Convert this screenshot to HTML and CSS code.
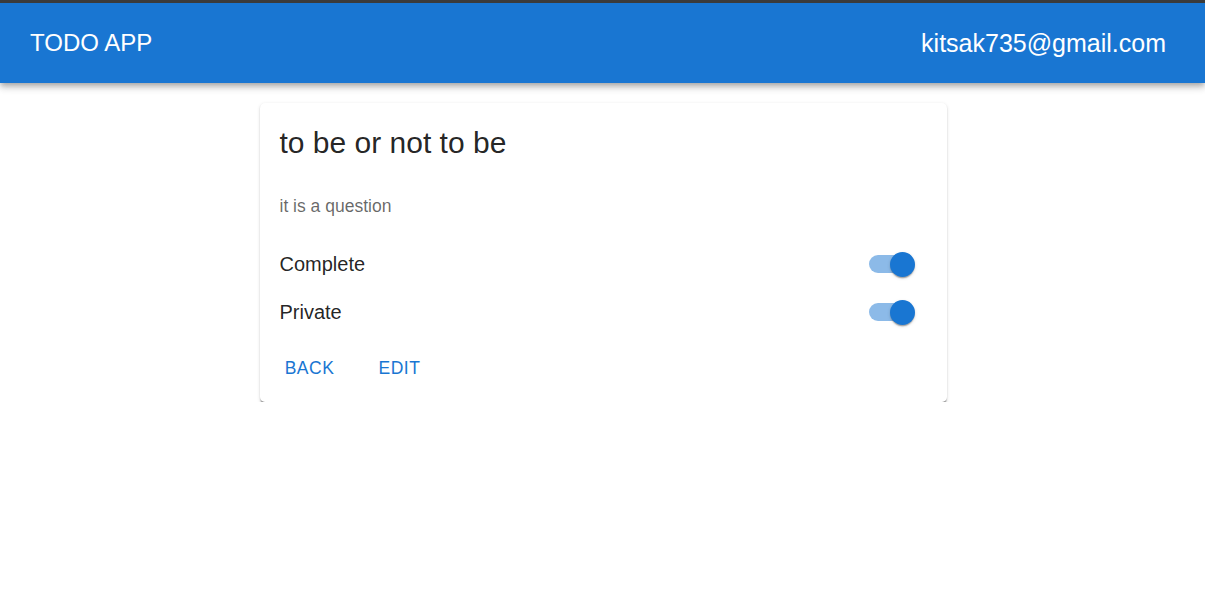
FILE: index.html
```html
<!DOCTYPE html>
<html lang="en">
<head>
<meta charset="utf-8">
<title>TODO APP</title>
<link rel="stylesheet" href="styles.css">
</head>
<body>
<header class="appbar">
  <div class="brand">TODO APP</div>
  <div class="user">kitsak735@gmail.com</div>
</header>
<main class="container">
  <section class="card">
    <div class="card-content">
      <h1 class="title">to be or not to be</h1>
      <p class="desc">it is a question</p>
      <div class="row">
        <span class="label">Complete</span>
        <span class="switch"><span class="track"></span><span class="thumb"></span></span>
      </div>
      <div class="row">
        <span class="label">Private</span>
        <span class="switch"><span class="track"></span><span class="thumb"></span></span>
      </div>
    </div>
    <div class="card-actions">
      <button class="btn">BACK</button>
      <button class="btn">EDIT</button>
    </div>
  </section>
</main>
</body>
</html>
```
FILE: styles.css
```css
* { box-sizing: border-box; }
html, body {
  margin: 0;
  padding: 0;
  background: #ffffff;
  font-family: "Liberation Sans", Arial, sans-serif;
  color: rgba(0, 0, 0, 0.87);
}
.appbar {
  height: 83px;
  border-top: 3px solid #3b3b3b;
  background: #1976d2;
  color: #ffffff;
  display: flex;
  align-items: center;
  justify-content: space-between;
  padding: 0 39px 0 30px;
  font-size: 25px;
  box-shadow: 0 2.5px 5px -1px rgba(0,0,0,0.2), 0 5px 6px 0 rgba(0,0,0,0.14), 0 1.25px 12px 0 rgba(0,0,0,0.12);
  position: relative;
}
.brand, .user { line-height: 40px; }
.brand { font-size: 24px; }
.container {
  display: flex;
  justify-content: center;
  padding: 20px 0 0 1px;
}
.card {
  width: 687px;
  background: #ffffff;
  border-radius: 5px;
  box-shadow: 0 2.5px 1.25px -1.25px rgba(0,0,0,0.25), 0 1.25px 1.25px 0 rgba(0,0,0,0.16), 0 1.25px 3.75px 0 rgba(0,0,0,0.12);
}
.card-content {
  padding: 20px 20px 0 20px;
}
.title {
  margin: 0;
  font-size: 30px;
  font-weight: 400;
  line-height: 40px;
}
.desc {
  margin: 30.5px 0 0 0;
  font-size: 17.5px;
  line-height: 25px;
  color: rgba(0, 0, 0, 0.6);
}
.desc + .row { margin-top: 21.5px; }
.row {
  display: flex;
  align-items: center;
  justify-content: space-between;
  height: 48px;
}
.label {
  font-size: 20px;
  line-height: 30px;
}
.switch {
  position: relative;
  width: 72.5px;
  height: 47.5px;
  display: inline-block;
}
.track {
  position: absolute;
  left: 15px;
  top: 15px;
  width: 42.5px;
  height: 17.5px;
  border-radius: 9px;
  background: #1976d2;
  opacity: 0.5;
}
.thumb {
  position: absolute;
  left: 36.25px;
  top: 11.25px;
  width: 25px;
  height: 25px;
  border-radius: 50%;
  background: #1976d2;
  box-shadow: 0 2.5px 1.25px -1.25px rgba(0,0,0,0.2), 0 1.25px 1.25px 0 rgba(0,0,0,0.14), 0 1.25px 3.75px 0 rgba(0,0,0,0.12);
}
.card-actions {
  display: flex;
  gap: 10px;
  padding: 10px;
}
.btn {
  min-width: 80px;
  height: 45.6px;
  padding: 7.5px 10px;
  border: none;
  background: transparent;
  color: #1976d2;
  font-family: "Liberation Sans", Arial, sans-serif;
  font-size: 17.5px;
  letter-spacing: 0.5px;
  font-weight: 400;
  border-radius: 5px;
  cursor: pointer;
}
```
